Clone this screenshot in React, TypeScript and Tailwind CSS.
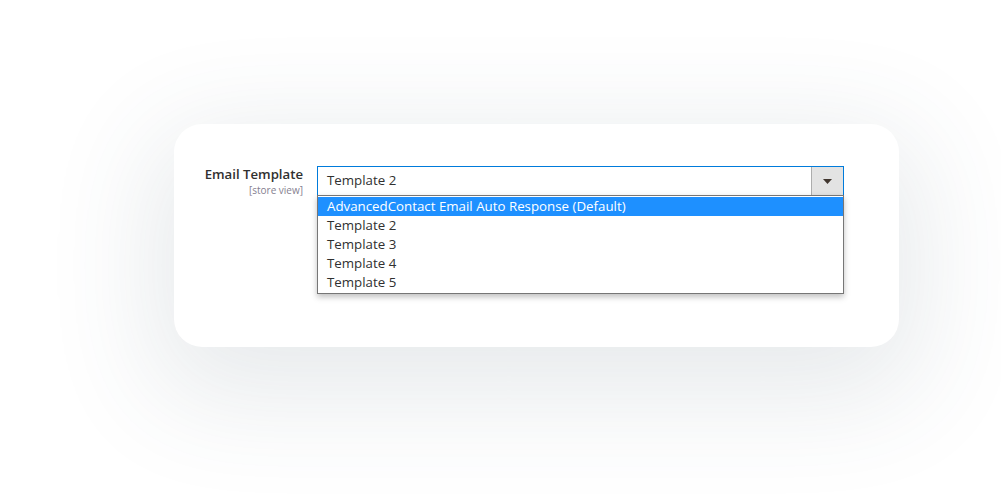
const options = [
  'AdvancedContact Email Auto Response (Default)',
  'Template 2',
  'Template 3',
  'Template 4',
  'Template 5',
];

export default function App() {
  return (
    <div
      className="w-[1001px] h-[503px] bg-white overflow-hidden pt-[124px] pl-[174px]"
      style={{ fontFamily: '"Open Sans", "Noto Sans", sans-serif' }}
    >
      <div className="w-[725px] h-[223px] bg-white rounded-[28px] shadow-[0_30px_110px_20px_rgba(60,80,100,0.12)] pt-[42px] pl-[20px] flex items-start gap-[14px]">
        {/* Label */}
        <div className="w-[109px] text-right">
          <div className="text-[13.2px] leading-[17px] font-semibold text-[#303030]">Email Template</div>
          <div className="text-[10px] leading-[13px] text-[#858090] mt-[1px]">[store view]</div>
        </div>

        {/* Select with open list */}
        <div className="relative w-[527px]">
          <div className="h-[30px] border border-[#007bdb] bg-white flex items-center">
            <span className="flex-1 pl-[9px] text-[13.3px] text-[#303030]">Template 2</span>
            <div className="w-[32px] h-full bg-[#e3e3e3] border-l border-[#adadad] flex items-center justify-center">
              <svg width="9" height="5" viewBox="0 0 9 5">
                <path d="M0 0H9L4.5 5Z" fill="#41362f" />
              </svg>
            </div>
          </div>
          <div className="absolute left-0 top-[29px] w-full border border-[#767676] bg-white shadow-[0_3px_6px_rgba(0,0,0,0.25)] pt-[1px] pb-[1px]">
            {options.map((o, i) => (
              <div
                key={o}
                className={
                  i === 0
                    ? 'h-[19px] leading-[19px] pl-[9px] text-[13.3px] bg-[#1e90ff] text-white'
                    : 'h-[19px] leading-[19px] pl-[9px] text-[13.3px] text-[#303030]'
                }
              >
                {o}
              </div>
            ))}
          </div>
        </div>
      </div>
    </div>
  );
}
